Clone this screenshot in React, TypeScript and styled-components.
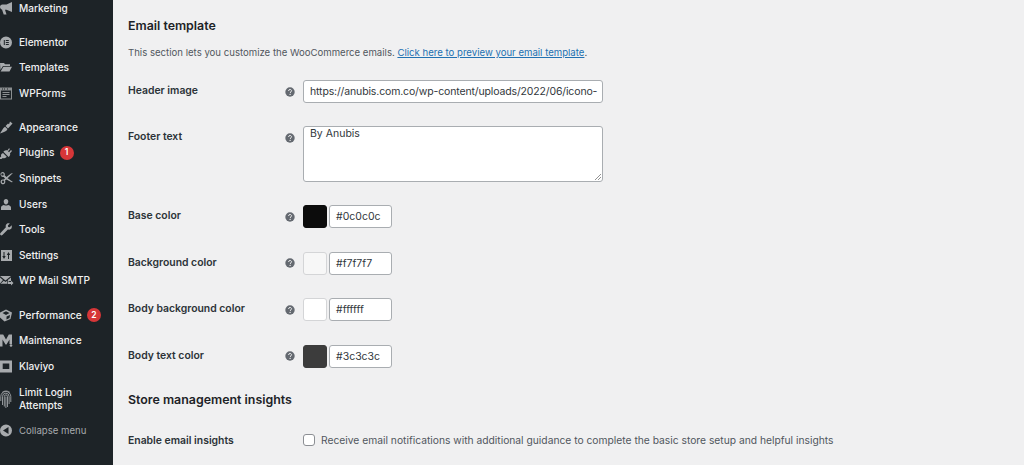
import React from "react";
import styled, { createGlobalStyle } from "styled-components";

const Global = createGlobalStyle`
  html, body { margin: 0; padding: 0; height: 465px; overflow: hidden; background: #f0f0f1; }
  body { font-family: Inter, "Liberation Sans", sans-serif; color: #3c434a; }
  #root { height: 465px; }
`;

const Page = styled.div`
  display: flex;
  height: 465px;
  overflow: hidden;
`;
const Sidebar = styled.nav`
  width: 113px;
  flex: none;
  background: #1d2327;
  overflow: hidden;
`;
const MenuList = styled.ul`
  list-style: none;
  margin: -4.5px 0 0;
  padding: 0;
`;
const MenuItem = styled.li<{ $gap?: number; $tall?: boolean }>`
  display: flex;
  align-items: center;
  height: ${(p) => (p.$tall ? 39 : 25.6)}px;
  margin-top: ${(p) => p.$gap ?? 0}px;
  color: #f0f0f1;
  font-size: 10.15px;
  font-weight: 500;
  line-height: 13px;
`;
const IconSlot = styled.span`
  width: 19px;
  flex: none;
  display: flex;
  align-items: center;
  color: #a7aaad;
  svg { display: block; }
`;
const Badge = styled.span`
  display: inline-flex;
  align-items: center;
  justify-content: center;
  width: 14px;
  height: 14px;
  margin-left: 5px;
  border-radius: 50%;
  background: #d63638;
  color: #fff;
  font-size: 8.5px;
  font-weight: 600;
`;
const Collapse = styled(MenuItem)`
  color: #a7aaad;
  font-size: 9.6px;
  font-weight: 400;
`;
const Main = styled.main`
  flex: 1;
  min-width: 0;
  padding-left: 15px;
`;
const SectionTitle = styled.h2<{ $top: number; $bottom: number }>`
  margin: ${(p) => p.$top}px 0 ${(p) => p.$bottom}px;
  color: #1d2327;
  font-size: 12.4px;
  font-weight: 600;
  line-height: 18px;
`;
const Description = styled.p`
  margin: 0 0 20px;
  font-size: 9.6px;
  line-height: 14px;
  color: #50575e;
  a { color: #2271b1; text-decoration: underline; }
`;
const Row = styled.div<{ $mb: number }>`
  display: grid;
  grid-template-columns: 157px 18px 1fr;
  align-items: start;
  margin-bottom: ${(p) => p.$mb}px;
`;
const Label = styled.label`
  padding-top: 4px;
  font-size: 10.4px;
  font-weight: 600;
  line-height: 14px;
  color: #2c3338;
`;
const Help = styled.span`
  display: flex;
  width: 10px;
  height: 10px;
  margin-top: 6.5px;
  color: #646970;
`;
const TextInput = styled.div<{ $width: number; $tight?: boolean }>`
  box-sizing: border-box;
  width: ${(p) => p.$width}px;
  height: 23px;
  padding: 0 6px;
  background: #fff;
  border: 1px solid #a9adb1;
  border-radius: 3px;
  font-size: 10.5px;
  line-height: 21px;
  letter-spacing: ${(p) => (p.$tight ? "-0.14px" : "0")};
  color: #32373c;
  white-space: nowrap;
  overflow: hidden;
`;
const TextArea = styled.div`
  position: relative;
  box-sizing: border-box;
  width: 300px;
  height: 56px;
  padding: 0 6px;
  background: #fff;
  border: 1px solid #a9adb1;
  border-radius: 3px;
  font-size: 10.5px;
  line-height: 14px;
  color: #32373c;
`;
const Grip = styled.svg`
  position: absolute;
  right: 0;
  bottom: 0;
`;
const ColorField = styled.div`
  display: flex;
  gap: 2px;
`;
const Swatch = styled.span<{ $color: string }>`
  box-sizing: border-box;
  width: 24px;
  height: 23px;
  background: ${(p) => p.$color};
  border: 1px solid ${(p) => (p.$color === "#0c0c0c" || p.$color === "#3c3c3c" ? p.$color : "#d4d5d7")};
  border-radius: 3px;
`;
const CheckRow = styled.div`
  display: flex;
  align-items: center;
  gap: 6px;
  font-size: 10.27px;
  line-height: 14px;
  padding-top: 3px;
  color: #50575e;
`;
const Check = styled.span`
  box-sizing: border-box;
  width: 12px;
  height: 12px;
  flex: none;
  background: #fff;
  border: 1px solid #8c8f94;
  border-radius: 3px;
`;

const I = ({ children, w = 13, h = 13 }: { children: React.ReactNode; w?: number; h?: number }) => (
  <svg width={w} height={h} viewBox={`0 0 ${w} ${h}`} fill="currentColor">{children}</svg>
);

const icons: Record<string, React.ReactNode> = {
  marketing: <I><path d="M12 0v10L6.500 7.800H5L6.500 12.500H3.700L2 7.500C.8 7.200 0 6.200 0 5 0 3.600 1 2.500 2.500 2.500H6.500z" /></I>,
  elementor: <I><path fillRule="evenodd" d="M6 .5a6 6 0 1 1 0 12 6 6 0 0 1 0-12zM3.800 4v5h1V4zm2 0v1h3V4zm0 2v1h3V6zm0 2v1h3V8z" /></I>,
  templates: <I><path d="M0 2h4l1 1.300h5V5H3L.4 9zM3.400 5.800H12L9.500 10.500H.6z" /></I>,
  wpforms: <I><path fillRule="evenodd" opacity=".8" d="M0 .5h12v12H0zm1 3v8h10v-8zm1-2v1h1v-1zm2 0v1h1v-1zM7 1.500v1h1v-1zM2.500 5h7v1h-7zm0 2h7v1h-7zm0 2h4v1h-4z" /></I>,
  appearance: <I><path d="M12.500 2.500 8 7.500 5.600 5 8 2.500 9 3.200 10 .5zM5 5.700l2.400 2.400C7 10.500 4 11 0 12.500 2 10 2.600 7 5 5.700z" /></I>,
  plugins: <I><path d="M10 3 8 5.200l1 1L11 4l1 1-2 2.200c.4 1.300.1 2.400-.8 3.200l-.6.6L3.400 5.800l.7-.7C5 4.300 6.100 4 7.400 4.500L9 2.200zM3 7l3.800 3.800-.8.800C5 12.400 3.900 12.500 2.800 12L1.500 13H0V11.500L1.200 10.400C.8 9.400 1 8.500 1.800 7.800z" /></I>,
  snippets: <I><path fillRule="evenodd" d="M2.500 0a2.400 2.400 0 0 1 2.200 3.300L6.400 5 11 1.500 13 1 7.600 6.300l5.400 3.800-1.500.2-5-2.900L5 8.600a2.400 2.400 0 1 1-1.200-1L5 6.500 3.700 5A2.400 2.400 0 1 1 2.500 0zm0 1.200a1.200 1.200 0 1 0 0 2.400 1.200 1.200 0 0 0 0-2.400zM3 8.600a1.200 1.200 0 1 0 0 2.400 1.200 1.200 0 0 0 0-2.400z" /></I>,
  users: <I><path d="M6 1c1.400 0 2.300 1 2.300 2.500S7.400 6.400 6 6.400 3.700 5 3.700 3.500 4.600 1 6 1zM1 9.500C1 8 2.500 7.300 4 6.900c.5.500 1.200.7 2 .7s1.500-.2 2-.7c1.500.4 3 1.100 3 2.600V12H1z" /></I>,
  tools: <I><path d="M11.600 2.300 9.700 4.200 8.200 3.900 7.900 2.400 9.800.5C8.400-.1 6.900.3 6.200 1.400 5.600 2.300 5.500 3.300 5.900 4.300L.5 10c-.6.700-.5 1.500 0 2s1.300.5 1.900 0l5.500-5.500c1 .3 2 .2 2.900-.4 1-.8 1.300-2.400.8-3.800z" /></I>,
  settings: <I><path fillRule="evenodd" d="M1 1h11v11H1zm2.500 2v4H2.300l1.700 3 1.700-3H4.500V3zM9 10V6h1.200L8.500 3 6.800 6H8v4z" /></I>,
  mail: <I w={14}><path d="M0 2h11L5.500 6.500zM0 3.500l3 2.500-3 3.500zM11 3.500V7H9.500L8 8l-.2-2zM3.800 6.800l1.700 1.300 1.700-1.300.3 3H.5z" /><path d="M8 8h3V6.500L13.500 9 11 11.500V10H8z" /></I>,
  performance: <I><path fillRule="evenodd" d="M6 .5 12 3.500 10.500 10 4.500 12.500 0 8.500V3.500zM2.500 4l3.500 2 3.500-2L6 2.300zM6.500 7.500V10.500l3-1.500.5-3z" /></I>,
  maintenance: <I><path d="M0 .5h3.200L6 5.500 8.800.5H12v9.500H9.500V5.500L6.500 10.500h-1L2.500 5.500V12.500H0z" /><circle cx="11" cy="11.500" r="1.300" /></I>,
  klaviyo: <I><path fillRule="evenodd" d="M0 .5h12v12H0zm2.700 3v5.500h6.600V3.500z" /></I>,
  limit: <I w={12} h={20}><path fill="none" stroke="currentColor" strokeWidth=".85" d="M.8 12V7.500a5 5 0 0 1 10 0V13M2.500 16V7.500a3.300 3.300 0 0 1 6.600 0V15M4.300 17.500V7.500a1.600 1.600 0 0 1 3.200 0V18M5.900 7.500V19" /><path fill="none" stroke="currentColor" strokeWidth=".7" d="M2 3.500A6 6 0 0 1 10 3.500" /></I>,
  collapse: <I><path fillRule="evenodd" d="M6 .5a6 6 0 1 1 0 12 6 6 0 0 1 0-12zM8.500 3 3 6.500 8.500 10z" /></I>,
};

const Q = () => (
  <svg width="10" height="10" viewBox="0 0 10 10">
    <circle cx="5" cy="5" r="4.700" fill="currentColor" />
    <path d="M3.500 3.900C3.600 3 4.200 2.500 5 2.500c.9 0 1.500.5 1.500 1.300 0 1.100-1.300 1.100-1.300 2.100" fill="none" stroke="#f0f0f1" strokeWidth="1" />
    <circle cx="5.100" cy="7.400" r=".65" fill="#f0f0f1" />
  </svg>
);

type Item = { key: string; label: React.ReactNode; gap?: number; badge?: string; tall?: boolean };
const items: Item[] = [
  { key: "marketing", label: "Marketing" },
  { key: "elementor", label: "Elementor", gap: 8.2 },
  { key: "templates", label: "Templates" },
  { key: "wpforms", label: "WPForms" },
  { key: "appearance", label: "Appearance", gap: 8.500 },
  { key: "plugins", label: "Plugins", badge: "1" },
  { key: "snippets", label: "Snippets" },
  { key: "users", label: "Users" },
  { key: "tools", label: "Tools" },
  { key: "settings", label: "Settings" },
  { key: "mail", label: "WP Mail SMTP" },
  { key: "performance", label: "Performance", gap: 8.500, badge: "2" },
  { key: "maintenance", label: "Maintenance" },
  { key: "klaviyo", label: "Klaviyo" },
  { key: "limit", label: <>Limit Login<br />Attempts</>, tall: true },
];

const colors = [
  { label: "Base color", value: "#0c0c0c", mb: 23.500 },
  { label: "Background color", value: "#f7f7f7", mb: 23.500 },
  { label: "Body background color", value: "#ffffff", mb: 23.500 },
  { label: "Body text color", value: "#3c3c3c", mb: 0 },
];

export default function App() {
  return (
    <Page>
      <Global />
      <Sidebar>
        <MenuList>
          {items.map((it) => (
            <MenuItem key={it.key} $gap={it.gap} $tall={it.tall}>
              <IconSlot>{icons[it.key]}</IconSlot>
              <span>{it.label}</span>
              {it.badge && <Badge>{it.badge}</Badge>}
            </MenuItem>
          ))}
          <Collapse>
            <IconSlot>{icons.collapse}</IconSlot>
            <span>Collapse menu</span>
          </Collapse>
        </MenuList>
      </Sidebar>
      <Main>
        <SectionTitle $top={17} $bottom={11}>Email template</SectionTitle>
        <Description>
          This section lets you customize the WooCommerce emails. <a href="#p">Click here to preview your email template</a>.
        </Description>
        <Row $mb={23}>
          <Label>Header image</Label>
          <Help><Q /></Help>
          <TextInput $width={300} $tight>https://anubis.com.co/wp-content/uploads/2022/06/icono-</TextInput>
        </Row>
        <Row $mb={23}>
          <Label>Footer text</Label>
          <Help><Q /></Help>
          <TextArea>
            By Anubis
            <Grip width="9" height="9" viewBox="0 0 9 9">
              <path d="M8 2 2 8M8 5 5 8" stroke="#777" strokeWidth=".8" />
            </Grip>
          </TextArea>
        </Row>
        {colors.map((c) => (
          <Row key={c.label} $mb={c.mb}>
            <Label>{c.label}</Label>
            <Help><Q /></Help>
            <ColorField>
              <Swatch $color={c.value} />
              <TextInput $width={63}>{c.value}</TextInput>
            </ColorField>
          </Row>
        ))}
        <SectionTitle $top={23} $bottom={21}>Store management insights</SectionTitle>
        <Row $mb={0}>
          <Label>Enable email insights</Label>
          <span />
          <CheckRow>
            <Check />
            Receive email notifications with additional guidance to complete the basic store setup and helpful insights
          </CheckRow>
        </Row>
      </Main>
    </Page>
  );
}
